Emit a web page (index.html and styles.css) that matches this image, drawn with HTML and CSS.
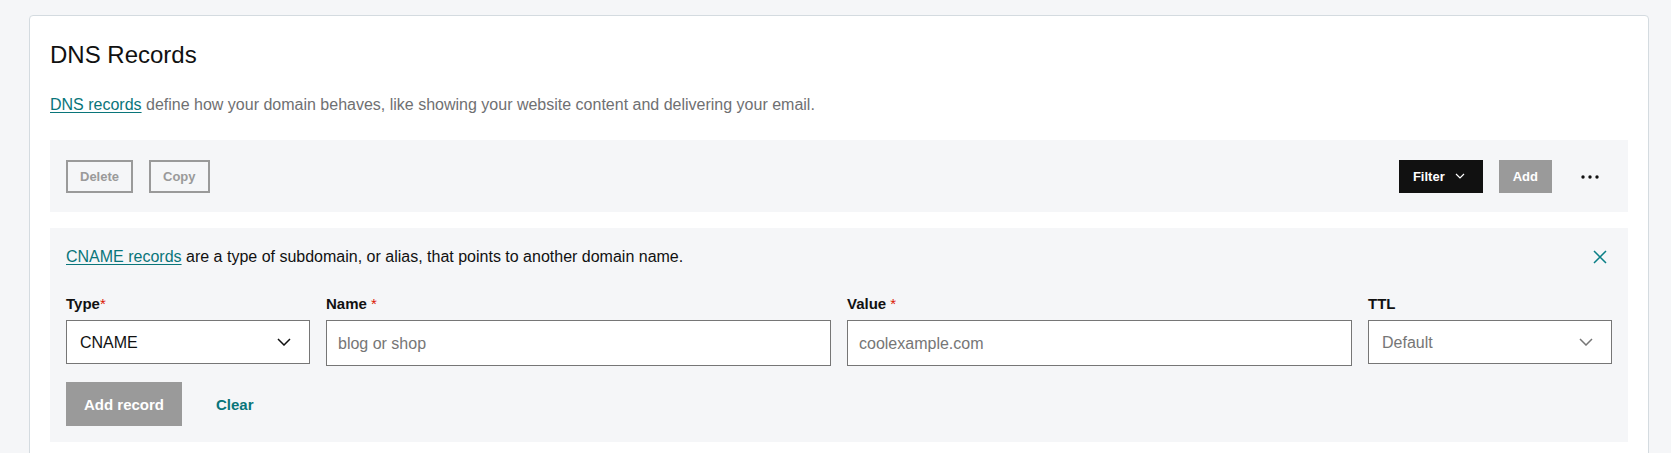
FILE: index.html
```html
<!DOCTYPE html>
<html lang="en">
<head>
<meta charset="utf-8">
<title>DNS Records</title>
<link rel="stylesheet" href="styles.css">
</head>
<body>
<section class="card">
  <h1 class="title">DNS Records</h1>
  <p class="desc"><a href="#" class="link">DNS records</a> define how your domain behaves, like showing your website content and delivering your email.</p>

  <div class="toolbar">
    <div class="tb-left">
      <button class="btn-outline">Delete</button>
      <button class="btn-outline">Copy</button>
    </div>
    <div class="tb-right">
      <button class="btn-filter">Filter
        <svg class="filter-chev" width="10" height="6" viewBox="0 0 10 6"><polyline points="1,1 5,5 9,1" fill="none" stroke="#fff" stroke-width="1.2"/></svg>
      </button>
      <button class="btn-add">Add</button>
      <button class="btn-more" aria-label="More">
        <svg width="18" height="4" viewBox="0 0 18 4"><circle cx="2" cy="2" r="1.7" fill="#111"/><circle cx="9" cy="2" r="1.7" fill="#111"/><circle cx="16" cy="2" r="1.7" fill="#111"/></svg>
      </button>
    </div>
  </div>

  <div class="form-panel">
    <div class="info-row">
      <p class="info"><a href="#" class="link">CNAME records</a> are a type of subdomain, or alias, that points to another domain name.</p>
      <button class="close" aria-label="Close">
        <svg width="14" height="14" viewBox="0 0 14 14"><path d="M1 1 L13 13 M13 1 L1 13" stroke="#0a7f86" stroke-width="1.5" fill="none"/></svg>
      </button>
    </div>
    <div class="fields">
      <div class="field">
        <label class="label">Type<span class="req">*</span></label>
        <div class="select">
          <span class="select-text">CNAME</span>
          <svg width="14" height="8" viewBox="0 0 14 8"><polyline points="1,1 7,7 13,1" fill="none" stroke="#111" stroke-width="1.5"/></svg>
        </div>
      </div>
      <div class="field">
        <label class="label">Name <span class="req">*</span></label>
        <div class="input"><span class="placeholder">blog or shop</span></div>
      </div>
      <div class="field">
        <label class="label">Value <span class="req">*</span></label>
        <div class="input"><span class="placeholder">coolexample.com</span></div>
      </div>
      <div class="field">
        <label class="label">TTL</label>
        <div class="select">
          <span class="select-text muted">Default</span>
          <svg width="14" height="8" viewBox="0 0 14 8"><polyline points="1,1 7,7 13,1" fill="none" stroke="#767676" stroke-width="1.5"/></svg>
        </div>
      </div>
    </div>
    <div class="actions">
      <button class="btn-primary">Add record</button>
      <button class="btn-text">Clear</button>
    </div>
  </div>
</section>
</body>
</html>
```

FILE: styles.css
```css
* { box-sizing: border-box; }

html, body { height: 100%; }

body {
  margin: 0;
  padding: 15px 22px 0 29px;
  background: #f5f6f8;
  font-family: "Liberation Sans", Arial, sans-serif;
  color: #111;
  overflow: hidden;
}

button {
  font-family: inherit;
  cursor: pointer;
}

.card {
  background: #fff;
  border: 1px solid #d4dbe0;
  border-radius: 4px;
  padding: 23px 20px 20px 20px;
  min-height: 440px;
}

.title {
  margin: 0;
  font-size: 24px;
  line-height: 32px;
  font-weight: 400;
  color: #111;
}

.desc {
  margin: 22px 0 23px 0;
  font-size: 16px;
  line-height: 24px;
  color: #6f7072;
}

.link {
  color: #09757a;
  text-decoration: underline;
  text-underline-offset: 2px;
}

.toolbar {
  background: #f5f6f8;
  height: 72px;
  padding: 0 16px;
  display: flex;
  align-items: center;
  justify-content: space-between;
}

.tb-left, .tb-right {
  display: flex;
  align-items: center;
  gap: 16px;
}

.toolbar button { margin-top: 1px; }

.btn-outline {
  height: 33px;
  padding: 0 12px;
  border: 2px solid #9a9a9a;
  background: transparent;
  color: #9a9a9a;
  font-size: 13px;
  font-weight: 700;
}

.btn-filter {
  height: 33px;
  padding: 0 18px 0 14px;
  border: none;
  background: #111;
  color: #fff;
  font-size: 13px;
  font-weight: 700;
  display: flex;
  align-items: center;
  gap: 10px;
}

.filter-chev { margin-top: -2px; }

.btn-add {
  height: 33px;
  padding: 0 14px;
  border: none;
  background: #9a9a9a;
  color: #fff;
  font-size: 13px;
  font-weight: 700;
}

.btn-more {
  width: 44px;
  height: 33px;
  border: none;
  background: transparent;
  padding: 0;
  display: flex;
  align-items: center;
  justify-content: center;
}

.form-panel {
  margin-top: 16px;
  background: #f5f6f8;
  padding: 16px;
}

.info-row {
  display: flex;
  align-items: center;
  justify-content: space-between;
}

.info {
  margin: 0;
  font-size: 16px;
  line-height: 26px;
  color: #111;
}

.close {
  border: none;
  background: transparent;
  padding: 0;
  margin-right: 5px;
  width: 14px;
  height: 14px;
  display: flex;
}

.fields {
  margin-top: 24px;
  display: grid;
  grid-template-columns: 244px 1fr 1fr 244px;
  column-gap: 16px;
  align-items: start;
}

.field {
  display: flex;
  flex-direction: column;
}

.label {
  font-size: 15px;
  line-height: 20px;
  font-weight: 700;
  color: #111;
  margin-bottom: 6px;
}

.req {
  color: #db1802;
  font-weight: 400;
}

.select, .input {
  background: #fff;
  border: 1px solid #767676;
  display: flex;
  align-items: center;
  font-size: 16px;
}

.select {
  height: 44px;
  padding: 2px 18px 0 13px;
  justify-content: space-between;
}

.select svg { margin-top: -2px; }

.input {
  height: 46px;
  padding: 2px 11px 0 11px;
}

.select-text { color: #111; }
.select-text.muted { color: #767676; }

.placeholder { color: #767676; }

.actions {
  margin-top: 16px;
  display: flex;
  align-items: center;
  gap: 16px;
}

.btn-primary {
  height: 44px;
  padding: 0 18px;
  border: none;
  background: #9a9a9a;
  color: #fff;
  font-size: 15px;
  font-weight: 700;
}

.btn-text {
  height: 44px;
  padding: 0 18px;
  border: none;
  background: transparent;
  color: #09757a;
  font-size: 15px;
  font-weight: 700;
}
```
